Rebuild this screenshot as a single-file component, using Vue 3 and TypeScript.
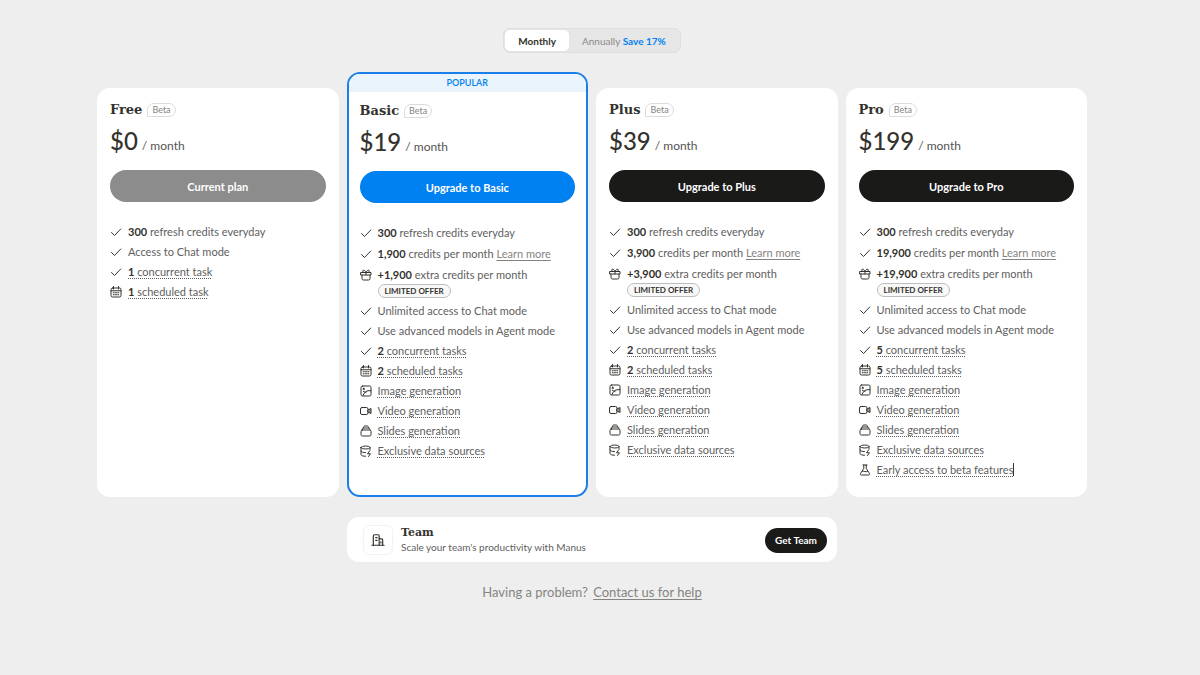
<script setup lang="ts">
import { ref } from 'vue'

type IconName = 'check' | 'gift' | 'calendar' | 'image' | 'video' | 'slides' | 'data' | 'flask'

interface Feature {
  icon: IconName
  strong?: string
  text: string
  more?: boolean
  offer?: boolean
  hint?: boolean
  caret?: boolean
}

interface Plan {
  name: string
  price: string
  action: string
  tone: 'muted' | 'primary' | 'dark'
  popular?: boolean
  features: Feature[]
}

const icons: Record<IconName, string[]> = {
  check: ['M3 13l6 6L21.500 6'],
  gift: [
    'M2 7h20v5H2z',
    'M4 12v7a3 3 0 0 0 3 3h10a3 3 0 0 0 3-3v-7',
    'M12 7v5',
    'M12 7C10 1 4.500 1 5.500 5c.4 1.500 2 2 6.500 2z',
    'M12 7c2-6 7.500-6 6.500-2-.4 1.500-2 2-6.500 2z',
  ],
  calendar: [
    'M5 4h14a3 3 0 0 1 3 3v12a3 3 0 0 1-3 3H5a3 3 0 0 1-3-3V7a3 3 0 0 1 3-3z',
    'M2 9.500h20',
    'M7 1v5',
    'M17 1v5',
    'M6.500 13.500h2M11 13.500h2M15.500 13.500h2M6.500 17.500h2M11 17.500h2M15.500 17.500h2',
  ],
  image: [
    'M5 2h14a3 3 0 0 1 3 3v14a3 3 0 0 1-3 3H5a3 3 0 0 1-3-3V5a3 3 0 0 1 3-3z',
    'M7.500 6.500a1.500 1.500 0 1 1 0 3 1.500 1.500 0 0 1 0-3z',
    'M6 21c2-5 5-8 8-9s5-1 8-.5',
    'M7 13l5 2',
  ],
  video: [
    'M4 5h9a3 3 0 0 1 3 3v8a3 3 0 0 1-3 3H4a3 3 0 0 1-3-3V8a3 3 0 0 1 3-3z',
    'M16 10l6-3v10l-6-3z',
    'M20 9v6',
  ],
  slides: [
    'M5 10h14a3 3 0 0 1 3 3v6a3 3 0 0 1-3 3H5a3 3 0 0 1-3-3v-6a3 3 0 0 1 3-3z',
    'M4 10c0-3 1-4 3-4h10c2 0 3 1 3 4',
    'M7 6c0-3 1-4 3-4h4c2 0 3 1 3 4',
  ],
  data: [
    'M2 5c0-4 18-4 18 0s-18 4-18 0z',
    'M2 5v14c0 2 4 3.500 9 3.500',
    'M20 5v5',
    'M2 12c0 2 4 3.200 9 3.200',
    'M19 12l-4 5.500h6L17 23',
  ],
  flask: [
    'M8 2h8',
    'M9.500 2v7L3 19c-1 2 0 3 2 3h14c2 0 3-1 2-3L14.500 9V2',
    'M7 15c3-2 6 2 10 0',
  ],
}

const paidFeatures = (credits: string, tasks: string): Feature[] => [
  { icon: 'check', strong: '300', text: 'refresh credits everyday' },
  { icon: 'check', strong: credits, text: 'credits per month', more: true },
  { icon: 'gift', strong: '+' + credits, text: 'extra credits per month', offer: true },
  { icon: 'check', text: 'Unlimited access to Chat mode' },
  { icon: 'check', text: 'Use advanced models in Agent mode' },
  { icon: 'check', strong: tasks, text: 'concurrent tasks', hint: true },
  { icon: 'calendar', strong: tasks, text: 'scheduled tasks', hint: true },
  { icon: 'image', text: 'Image generation', hint: true },
  { icon: 'video', text: 'Video generation', hint: true },
  { icon: 'slides', text: 'Slides generation', hint: true },
  { icon: 'data', text: 'Exclusive data sources', hint: true },
]

const plans: Plan[] = [
  {
    name: 'Free',
    price: '$0',
    action: 'Current plan',
    tone: 'muted',
    features: [
      { icon: 'check', strong: '300', text: 'refresh credits everyday' },
      { icon: 'check', text: 'Access to Chat mode' },
      { icon: 'check', strong: '1', text: 'concurrent task', hint: true },
      { icon: 'calendar', strong: '1', text: 'scheduled task', hint: true },
    ],
  },
  {
    name: 'Basic',
    price: '$19',
    action: 'Upgrade to Basic',
    tone: 'primary',
    popular: true,
    features: paidFeatures('1,900', '2'),
  },
  { name: 'Plus', price: '$39', action: 'Upgrade to Plus', tone: 'dark', features: paidFeatures('3,900', '2') },
  {
    name: 'Pro',
    price: '$199',
    action: 'Upgrade to Pro',
    tone: 'dark',
    features: [
      ...paidFeatures('19,900', '5'),
      { icon: 'flask', text: 'Early access to beta features', hint: true, caret: true },
    ],
  },
]

const billing = ref<'monthly' | 'annually'>('monthly')
</script>

<template>
  <main class="page">
    <div class="toggle" role="group" aria-label="Billing period">
      <button type="button" :class="{ active: billing === 'monthly' }" @click="billing = 'monthly'">Monthly</button>
      <button type="button" :class="{ active: billing === 'annually' }" @click="billing = 'annually'">
        Annually <span class="save">Save 17%</span>
      </button>
    </div>

    <div class="plans">
      <section v-for="plan in plans" :key="plan.name" class="card" :class="{ popular: plan.popular }">
        <div v-if="plan.popular" class="banner">POPULAR</div>
        <div class="body">
          <header class="heading">
            <h2>{{ plan.name }}</h2>
            <span class="beta">Beta</span>
          </header>
          <p class="price"><span class="amount">{{ plan.price }}</span><span class="period">/ month</span></p>
          <button type="button" class="action" :class="plan.tone">{{ plan.action }}</button>
          <ul class="features">
            <li v-for="f in plan.features" :key="f.icon + f.text" :class="{ roomy: f.more }">
              <svg class="icon" viewBox="0 0 24 24" aria-hidden="true">
                <path v-for="d in icons[f.icon]" :key="d" :d="d" />
              </svg>
              <div class="label">
                <span :class="{ hint: f.hint, caret: f.caret }"><b v-if="f.strong">{{ f.strong }}</b>{{ f.strong ? ' ' : '' }}{{ f.text }}</span>
                <template v-if="f.more">{{ ' ' }}<a href="#">Learn more</a></template>
                <span v-if="f.offer" class="offer">LIMITED OFFER</span>
              </div>
            </li>
          </ul>
        </div>
      </section>
    </div>

    <section class="team">
      <div class="team-icon">
        <svg viewBox="0 0 24 24" aria-hidden="true">
          <path d="M4 21V5a2 2 0 0 1 2-2h6a2 2 0 0 1 2 2v16" />
          <path d="M14 10h4a2 2 0 0 1 2 2v9" />
          <path d="M1.500 21h21" />
          <path d="M8 8h2.500M8 12.500h2.500M17 15v2" />
        </svg>
      </div>
      <div class="team-text">
        <h2>Team</h2>
        <p>Scale your team's productivity with Manus</p>
      </div>
      <button type="button" class="team-action">Get Team</button>
    </section>

    <p class="help">Having a problem? <a href="#">Contact us for help</a></p>
  </main>
</template>

<style>
body {
  background: #eeeeee;
}
</style>

<style scoped>
.page {
  display: flex;
  flex-direction: column;
  align-items: center;
  padding: 28px 31px 32px 15px;
  font-family: Lato, "Open Sans", "Noto Sans", sans-serif;
  font-size: 11px;
  line-height: 16px;
  color: #606060;
}

h2,
p,
ul {
  margin: 0;
  padding: 0;
}

button {
  border: 0;
  font-family: inherit;
  cursor: pointer;
}

.toggle {
  display: flex;
  padding: 1px;
  border: 1px solid #dedede;
  border-radius: 7px;
  background: #e6e6e6;
}

.toggle button {
  height: 21px;
  padding: 0 13px;
  border-radius: 5px;
  background: transparent;
  color: #8a8a8a;
  font-size: 10px;
}

.toggle button.active {
  background: #fff;
  color: #34322d;
  font-weight: 700;
}

.toggle .save {
  color: #0081f2;
  font-weight: 700;
}

.plans {
  display: grid;
  grid-template-columns: repeat(4, minmax(0, 1fr));
  gap: 8px;
  width: 100%;
  max-width: 990px;
  margin-top: 19px;
}

.card {
  margin-top: 16px;
  border-radius: 13px;
  background: #fff;
  overflow: hidden;
}

.card.popular {
  margin-top: 0;
  border: 2px solid #1a7fe8;
}

.banner {
  background: #e9f4fd;
  color: #0081f2;
  font-size: 9px;
  font-weight: 600;
  line-height: 18px;
  text-align: center;
}

.body {
  padding: 14px 13px 19px;
}

.popular .body {
  padding: 11px 11px 17px;
}

.heading {
  display: flex;
  align-items: center;
  gap: 5px;
}

h2 {
  font-family: "DejaVu Serif", serif;
  font-size: 13px;
  font-weight: 700;
  line-height: 16px;
  color: #34322d;
}

.beta {
  padding: 0 4px;
  border: 1px solid #dcdcdc;
  border-radius: 7px 7px 7px 0;
  color: #858481;
  font-size: 9px;
  line-height: 12px;
}

.price {
  display: flex;
  align-items: baseline;
  gap: 4px;
  margin-top: 7px;
  color: #34322d;
}

.amount {
  font-size: 24px;
  font-weight: 500;
  line-height: 32px;
}

.period {
  font-size: 12px;
  color: #535353;
}

.action {
  display: block;
  width: 100%;
  height: 32px;
  margin-top: 13px;
  border-radius: 16px;
  color: #fff;
  font-size: 11px;
  font-weight: 700;
}

.muted {
  background: #8c8c8c;
}

.primary {
  background: #0081f2;
}

.dark {
  background: #1a1a19;
}

.features {
  display: flex;
  flex-direction: column;
  gap: 4px;
  margin-top: 22px;
  list-style: none;
}

.features li {
  display: flex;
  gap: 6px;
}

.features .roomy {
  padding: 1px 0;
}

.icon {
  flex: none;
  width: 12px;
  height: 12px;
  margin-top: 2px;
  fill: none;
  stroke: #34322d;
  stroke-width: 2;
  stroke-linecap: round;
  stroke-linejoin: round;
}

.label {
  white-space: nowrap;
}

b {
  font-weight: 700;
  color: #34322d;
}

a {
  color: #858481;
  text-decoration: underline;
  text-underline-offset: 2px;
}

.hint {
  text-decoration: underline dotted 1px;
  text-underline-offset: 2px;
  text-decoration-skip-ink: none;
}

.caret {
  border-right: 1px solid #34322d;
}

.offer {
  display: block;
  width: max-content;
  margin: 1px 0;
  padding: 0 6px;
  border: 1px solid #bdbdbd;
  border-radius: 8px;
  background: #f8f8f8;
  color: #34322d;
  font-size: 8px;
  font-weight: 700;
  line-height: 12px;
}

.team {
  display: flex;
  align-items: center;
  gap: 8px;
  box-sizing: border-box;
  width: 100%;
  max-width: 490px;
  margin-top: 20px;
  padding: 8px 10px 7px 16px;
  border-radius: 12px;
  background: #fff;
}

.team-icon {
  display: grid;
  place-items: center;
  width: 28px;
  height: 28px;
  border: 1px solid #f2f2f2;
  border-radius: 6px;
}

.team-icon svg {
  width: 14px;
  height: 14px;
  fill: none;
  stroke: #34322d;
  stroke-width: 2;
  stroke-linecap: round;
  stroke-linejoin: round;
}

.team-text {
  flex: 1;
}

.team-text h2 {
  font-size: 11px;
  line-height: 15px;
}

.team-text p {
  font-size: 10px;
  line-height: 15px;
}

.team-action {
  height: 25px;
  padding: 0 10px;
  border-radius: 13px;
  background: #1a1a19;
  color: #fff;
  font-size: 10px;
  font-weight: 700;
}

.help {
  margin-top: 22px;
  color: #858481;
  font-size: 13px;
}

.help a {
  margin-left: 2px;
}
</style>
